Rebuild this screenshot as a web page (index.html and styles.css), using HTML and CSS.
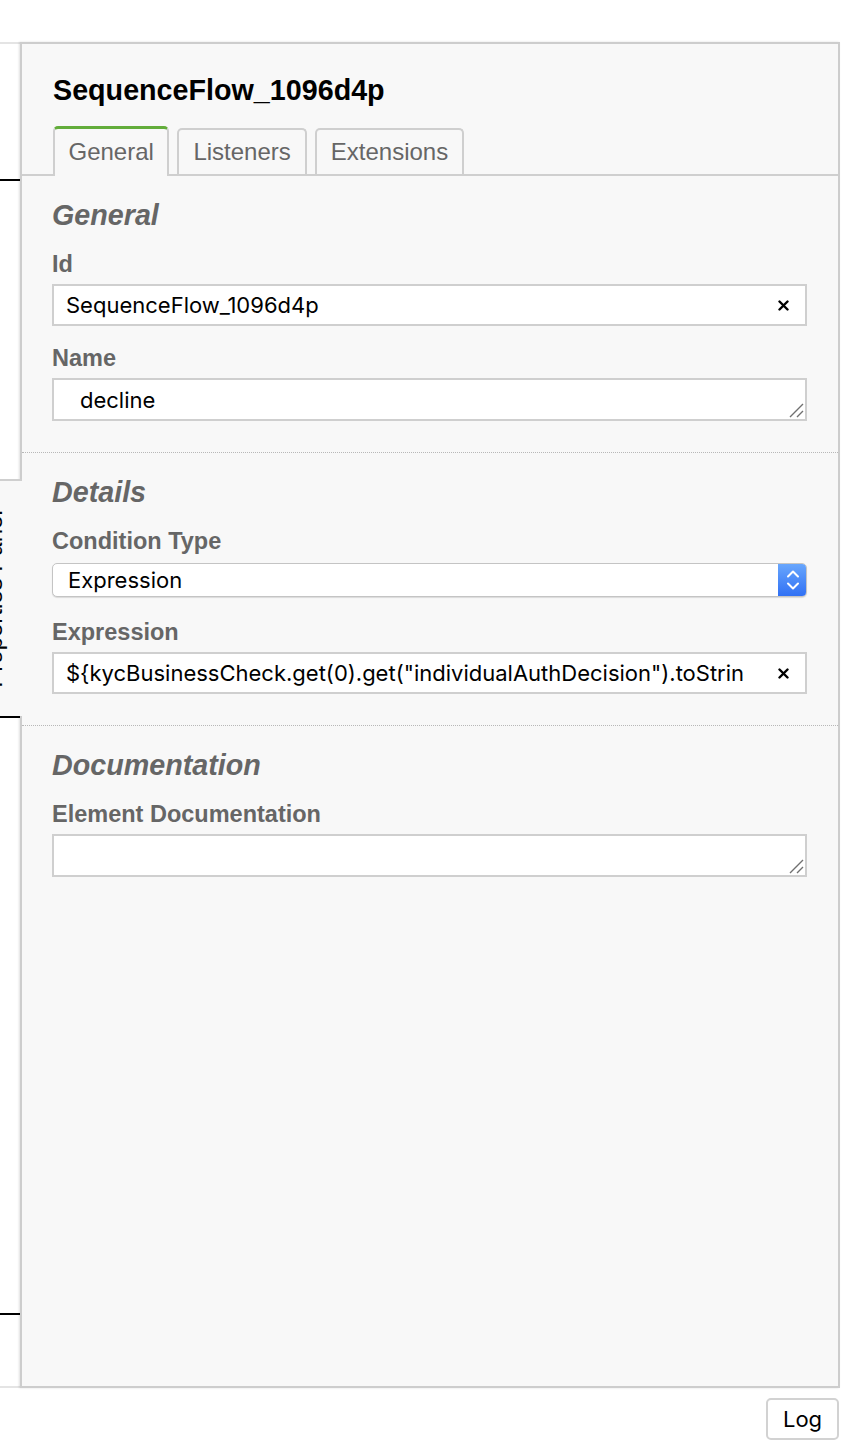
FILE: index.html
```html
<!DOCTYPE html>
<html>
<head>
<meta charset="utf-8">
<link rel="stylesheet" href="styles.css">
</head>
<body>
<div class="app">
  <div class="workspace">
    <div class="canvas"></div>
    <div class="diagram-line line-a"></div>
    <div class="diagram-line line-b"></div>
    <div class="diagram-line line-c"></div>
    <div class="toggle"><span class="toggle-text">Properties Panel</span></div>
    <aside class="panel">
      <div class="panel-header">
        <div class="panel-title">SequenceFlow_1096d4p</div>
      </div>
      <div class="tabs">
        <div class="tab active">General</div>
        <div class="tab">Listeners</div>
        <div class="tab">Extensions</div>
      </div>

      <section class="group">
        <div class="group-title">General</div>
        <div class="field">
          <label class="label">Id</label>
          <div class="input">
            <span class="value">SequenceFlow_1096d4p</span>
            <svg class="clear" width="11" height="11" viewBox="0 0 11 11"><path d="M1.5 1.5 L9.5 9.5 M9.5 1.5 L1.5 9.5" stroke="#000" stroke-width="2.4" stroke-linecap="round"/></svg>
          </div>
        </div>
        <div class="field">
          <label class="label">Name</label>
          <div class="textarea name">
            <span class="value">decline</span>
            <svg class="grip" width="16" height="16" viewBox="0 0 16 16"><path d="M2 15 L15 2 M9 15 L15 9" stroke="#707070" stroke-width="1.4"/></svg>
          </div>
        </div>
      </section>

      <section class="group">
        <div class="group-title">Details</div>
        <div class="field select-field">
          <label class="label">Condition Type</label>
          <div class="select">
            <span class="value">Expression</span>
            <span class="stepper">
              <svg width="14" height="24" viewBox="0 0 14 24"><path d="M2 8.5 L7 3.5 L12 8.5 M2 15.5 L7 20.5 L12 15.5" stroke="#fff" stroke-width="2" fill="none" stroke-linecap="round" stroke-linejoin="round"/></svg>
            </span>
          </div>
        </div>
        <div class="field">
          <label class="label">Expression</label>
          <div class="input">
            <span class="value clip">${kycBusinessCheck.get(0).get("individualAuthDecision").toString()}</span>
            <svg class="clear" width="11" height="11" viewBox="0 0 11 11"><path d="M1.5 1.5 L9.5 9.5 M9.5 1.5 L1.5 9.5" stroke="#000" stroke-width="2.4" stroke-linecap="round"/></svg>
          </div>
        </div>
      </section>

      <section class="group">
        <div class="group-title">Documentation</div>
        <div class="field">
          <label class="label">Element Documentation</label>
          <div class="textarea">
            <span class="value"></span>
            <svg class="grip" width="16" height="16" viewBox="0 0 16 16"><path d="M2 15 L15 2 M9 15 L15 9" stroke="#707070" stroke-width="1.4"/></svg>
          </div>
        </div>
      </section>
    </aside>
  </div>
  <div class="footer">
    <button class="log">Log</button>
  </div>
</div>
</body>
</html>
```
FILE: styles.css
```css
* { box-sizing: border-box; }
html, body { margin: 0; padding: 0; background: #fff; }
body { font-family: "Liberation Sans", Arial, sans-serif; color: #000; }

.app { padding-top: 42px; }

.workspace {
  position: relative;
  display: flex;
  height: 1346px;
}

.canvas {
  width: 20px;
  height: 100%;
  border-top: 2px solid #e4e4e4;
  border-bottom: 2px solid #e4e4e4;
}

.diagram-line {
  position: absolute;
  left: 0;
  width: 20px;
  height: 2.5px;
  background: #000;
  z-index: 3;
}
.line-a { top: 136.5px; }
.line-b { top: 673.5px; }
.line-c { top: 1270.5px; }

.toggle {
  position: absolute;
  left: 0;
  top: 437px;
  width: 22px;
  height: 237px;
  background: #f8f8f8;
  border-top: 2px solid #cfcfcf;
  overflow: hidden;
  z-index: 2;
  display: flex;
  align-items: center;
  justify-content: center;
}
.toggle-text {
  display: block;
  white-space: nowrap;
  font-size: 24px;
  line-height: 24px;
  color: #000;
  transform: translateX(-17px) rotate(-90deg);
}

.panel {
  width: 820px;
  height: 100%;
  background: #f8f8f8;
  border: 2px solid #cdcdcd;
  box-shadow: -1px 0 2px rgba(0,0,0,0.12);
}

.panel-header { padding: 29px 30px 0 31px; }
.panel-title {
  font-size: 28.7px;
  line-height: 34px;
  font-weight: bold;
  color: #000;
}

.tabs {
  margin-top: 19px;
  display: flex;
  align-items: flex-end;
  gap: 8px;
  padding-left: 31px;
  border-bottom: 2px solid #cfcfcf;
}
.tab {
  height: 46px;
  padding: 8px 14px 0;
  border: 2px solid #cfcfcf;
  border-bottom: none;
  border-radius: 5px 5px 0 0;
  font-size: 24px;
  line-height: 28px;
  color: #666;
  background: #f8f8f8;
}
.tab.active {
  height: 50px;
  padding-top: 9px;
  border-top: 3px solid #63ad3b;
  margin-bottom: -2px;
  padding-left: 13.5px;
  padding-right: 13.5px;
}

.group {
  padding: 22px 31px 31px 30px;
  border-bottom: 1px dotted #b8b8b8;
}
.group:last-child { border-bottom: none; }

.group-title {
  font-size: 28.7px;
  line-height: 34px;
  font-weight: bold;
  font-style: italic;
  color: #666;
}

.field { margin-top: 18px; }
.label {
  display: block;
  font-size: 23.5px;
  line-height: 28px;
  font-weight: bold;
  color: #666;
  margin-bottom: 6px;
}
.select-field { padding-bottom: 3px; }
.select-field .label { margin-bottom: 8px; }

.input, .textarea {
  position: relative;
  display: flex;
  align-items: center;
  background: #fff;
  border: 2px solid #cfcfcf;
  font-family: Inter, "Liberation Sans", Arial, sans-serif;
  font-size: 22px;
  line-height: 26px;
  color: #000;
}
.input {
  height: 42px;
  padding: 0 16px 0 12px;
}
.input .value { flex: 1; white-space: nowrap; overflow: hidden; }
.input .value.clip { margin-right: 34px; }
.clear { flex: none; }

.textarea {
  height: 43px;
  padding: 0 12px;
}
.textarea.name { padding-left: 26px; }
.grip {
  position: absolute;
  right: 1px;
  bottom: 1px;
}

.select {
  height: 34px;
  display: flex;
  align-items: center;
  background: #fff;
  border: 1px solid #c4c4c4;
  border-radius: 5px;
  box-shadow: 0 1px 1px rgba(0,0,0,0.12);
  font-family: Inter, "Liberation Sans", Arial, sans-serif;
  font-size: 22px;
  line-height: 26px;
  color: #000;
  overflow: hidden;
}
.select .value { flex: 1; padding-left: 15px; }
.stepper {
  align-self: stretch;
  width: 29px;
  margin: -1px -1px -1px 0;
  background: linear-gradient(#6aa8fd, #2f6ff4);
  border-radius: 0 5px 5px 0;
  display: flex;
  align-items: center;
  justify-content: center;
}
.stepper svg { display: block; }

.footer {
  display: flex;
  justify-content: flex-end;
  padding: 10px 11px 0 0;
}
.log {
  width: 73px;
  height: 42px;
  border: 2px solid #d2d2d2;
  border-radius: 5px;
  background: #fff;
  font-family: Inter, "Liberation Sans", Arial, sans-serif;
  font-size: 22px;
  line-height: 26px;
  color: #000;
  padding: 0;
}
```
